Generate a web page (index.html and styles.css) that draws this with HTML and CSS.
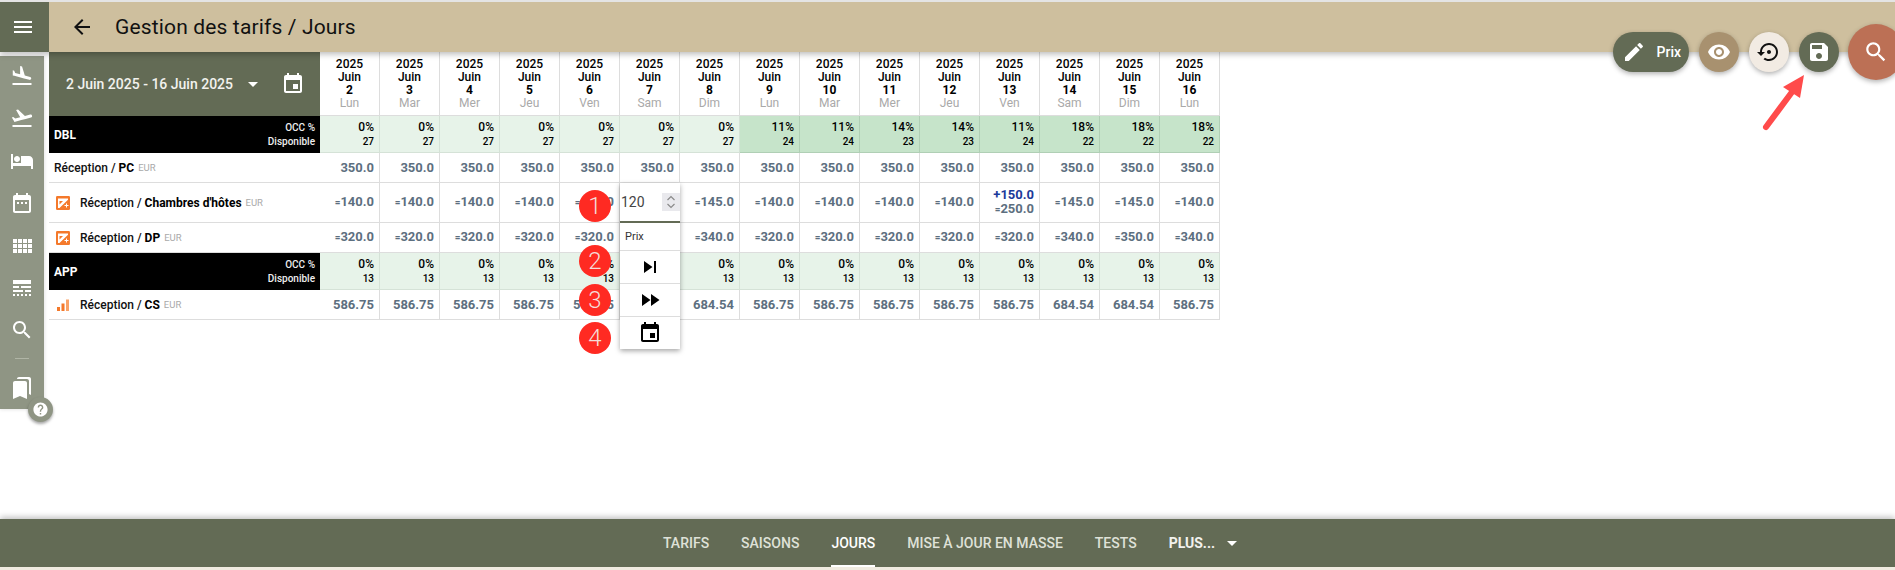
FILE: index.html
```html
<!DOCTYPE html>
<html lang="fr">
<head>
<meta charset="utf-8">
<title>Gestion des tarifs / Jours</title>
<link rel="stylesheet" href="styles.css">
</head>
<body>
<div class="app">
  <header class="topbar">
    <div class="burger"><svg class="i24" viewBox="0 0 24 24"><path d="M3 18h18v-2H3v2zm0-5h18v-2H3v2zm0-7v2h18V6H3z"/></svg></div>
    <svg class="back" viewBox="0 0 24 24"><path d="M20 11H7.83l5.59-5.59L12 4l-8 8 8 8 1.41-1.41L7.83 13H20v-2z"/></svg>
    <h1>Gestion des tarifs / Jours</h1>
  </header>
  <div class="middle">
    <nav class="sidebar">
      <svg class="i24" viewBox="0 0 24 24"><path d="M2.5 19h19v2h-19zm7.18-5.73l4.35 1.16 5.31 1.42c.8.21 1.62-.26 1.84-1.06.21-.8-.26-1.62-1.06-1.84l-5.31-1.42-2.76-9.02L10.12 2v8.28L5.15 8.95l-.93-2.32-1.45-.39v5.17l1.6.43 5.31 1.43z"/></svg>
      <svg class="i24" viewBox="0 0 24 24"><path d="M2.5 19h19v2h-19zm19.57-9.36c-.21-.8-1.04-1.28-1.84-1.06L14.92 10l-6.9-6.43-1.93.51 4.14 7.17-4.97 1.33-1.97-1.54-1.45.39 1.82 3.16.77 1.33 1.6-.43 5.31-1.42 4.35-1.16L21 11.49c.81-.23 1.28-1.05 1.07-1.85z"/></svg>
      <svg class="i24" viewBox="0 0 24 24"><path d="M7 13c1.66 0 3-1.34 3-3S8.66 7 7 7s-3 1.34-3 3 1.34 3 3 3zm12-6h-8v7H3V5H1v15h2v-3h18v3h2v-9c0-2.21-1.79-4-4-4z"/></svg>
      <svg class="i24" viewBox="0 0 24 24"><path d="M9 11H7v2h2v-2zm4 0h-2v2h2v-2zm4 0h-2v2h2v-2zm2-7h-1V2h-2v2H8V2H6v2H5c-1.11 0-1.99.9-1.99 2L3 20c0 1.1.89 2 2 2h14c1.1 0 2-.9 2-2V6c0-1.1-.9-2-2-2zm0 16H5V9h14v11z"/></svg>
      <svg class="i24" viewBox="0 0 24 24"><path d="M3 9h4V5H3v4zm0 5h4v-4H3v4zm5 0h4v-4H8v4zm5 0h4v-4h-4v4zM8 9h4V5H8v4zm5-4v4h4V5h-4zm5 9h4v-4h-4v4zM3 19h4v-4H3v4zm5 0h4v-4H8v4zm5 0h4v-4h-4v4zm5 0h4v-4h-4v4zm0-14v4h4V5h-4z"/></svg>
      <svg class="i24" viewBox="0 0 24 24"><path d="M3 4h18v4H3zM3 10h6v2H3zM11 10h10v2H11zM3 14h10v2H3zM15 14h6v2h-6zM3 18h2v2H3zM7 18h2v2H7zM11 18h2v2h-2zM15 18h2v2h-2zM19 18h2v2h-2z"/></svg>
      <svg class="i24" viewBox="0 0 24 24"><path d="M15.5 14h-.79l-.28-.27C15.41 12.59 16 11.11 16 9.5 16 5.91 13.09 3 9.5 3S3 5.91 3 9.5 5.91 16 9.5 16c1.61 0 3.09-.59 4.23-1.57l.27.28v.79l5 4.99L20.49 19l-4.99-5zm-6 0C7.01 14 5 11.99 5 9.5S7.01 5 9.5 5 14 7.01 14 9.5 11.99 14 9.5 14z"/></svg>
      <span class="rule"></span>
      <svg class="i24" viewBox="0 0 24 24"><path d="M19 18l2 1V3c0-1.1-.9-2-2-2H8.99C7.89 1 7 1.9 7 3h10c1.1 0 2 .9 2 2v13zM15 5H5c-1.1 0-2 .9-2 2v16l7-3 7 3V7c0-1.1-.9-2-2-2z"/></svg>
      <span class="help"><svg viewBox="0 0 24 24"><path d="M12 2C6.48 2 2 6.48 2 12s4.48 10 10 10 10-4.48 10-10S17.52 2 12 2zm1 17h-2v-2h2v2zm2.07-7.75l-.9.92C13.45 12.9 13 13.5 13 15h-2v-.5c0-1.1.45-2.1 1.17-2.83l1.24-1.26c.37-.36.59-.86.59-1.41 0-1.1-.9-2-2-2s-2 .9-2 2H8c0-2.21 1.79-4 4-4s4 1.79 4 4c0 .88-.36 1.68-.93 2.25z"/></svg></span>
    </nav>
    <table class="grid">
      <thead>
        <tr class="r-head">
          <th class="range">
            <div class="range-in">
              <span class="range-text">2 Juin 2025 - 16 Juin 2025</span>
              <span class="caret"></span>
              <svg class="i24 cal" viewBox="0 0 24 24"><path d="M17 12h-5v5h5v-5zM16 1v2H8V1H6v2H5c-1.11 0-1.99.9-1.99 2L3 19c0 1.1.89 2 2 2h14c1.1 0 2-.9 2-2V5c0-1.1-.9-2-2-2h-1V1h-2zm3 18H5V8h14v11z"/></svg>
            </div>
          </th>
          <th>2025<br>Juin<br><b>2</b><br><span class="dow">Lun</span></th>
          <th>2025<br>Juin<br><b>3</b><br><span class="dow">Mar</span></th>
          <th>2025<br>Juin<br><b>4</b><br><span class="dow">Mer</span></th>
          <th>2025<br>Juin<br><b>5</b><br><span class="dow">Jeu</span></th>
          <th>2025<br>Juin<br><b>6</b><br><span class="dow">Ven</span></th>
          <th>2025<br>Juin<br><b>7</b><br><span class="dow">Sam</span></th>
          <th>2025<br>Juin<br><b>8</b><br><span class="dow">Dim</span></th>
          <th>2025<br>Juin<br><b>9</b><br><span class="dow">Lun</span></th>
          <th>2025<br>Juin<br><b>10</b><br><span class="dow">Mar</span></th>
          <th>2025<br>Juin<br><b>11</b><br><span class="dow">Mer</span></th>
          <th>2025<br>Juin<br><b>12</b><br><span class="dow">Jeu</span></th>
          <th>2025<br>Juin<br><b>13</b><br><span class="dow">Ven</span></th>
          <th>2025<br>Juin<br><b>14</b><br><span class="dow">Sam</span></th>
          <th>2025<br>Juin<br><b>15</b><br><span class="dow">Dim</span></th>
          <th>2025<br>Juin<br><b>16</b><br><span class="dow">Lun</span></th>
        </tr>
      </thead>
      <tbody>
        <tr class="r-occ">
          <td class="room"><div class="room-in"><span class="room-name">DBL</span><span class="room-legend">OCC %<br>Disponible</span></div></td>
          <td class="o">0%<small>27</small></td><td class="o">0%<small>27</small></td><td class="o">0%<small>27</small></td><td class="o">0%<small>27</small></td><td class="o">0%<small>27</small></td><td class="o">0%<small>27</small></td><td class="o">0%<small>27</small></td>
          <td class="o hi">11%<small>24</small></td><td class="o hi">11%<small>24</small></td><td class="o hi">14%<small>23</small></td><td class="o hi">14%<small>23</small></td><td class="o hi">11%<small>24</small></td><td class="o hi">18%<small>22</small></td><td class="o hi">18%<small>22</small></td><td class="o hi">18%<small>22</small></td>
        </tr>
        <tr class="r-pc">
          <td class="label"><div class="label-in">Réception / <b>PC</b> <span class="cur">EUR</span></div></td>
          <td class="p">350.0</td><td class="p">350.0</td><td class="p">350.0</td><td class="p">350.0</td><td class="p">350.0</td><td class="p">350.0</td><td class="p">350.0</td><td class="p">350.0</td><td class="p">350.0</td><td class="p">350.0</td><td class="p">350.0</td><td class="p">350.0</td><td class="p">350.0</td><td class="p">350.0</td><td class="p">350.0</td>
        </tr>
        <tr class="r-ch">
          <td class="label"><div class="label-in"><svg class="ico" viewBox="0 0 14 14"><rect width="14" height="14" rx="1.2" fill="#f4792b"/><path d="M2 2.500h10v1.300L3.500 12H2zM3.500 5v3.500L7 5z" fill="#fff" fill-rule="evenodd"/><path d="M8.500 9h4v1h-4zM10 7.500h1v4h-1z" fill="#fff"/></svg>Réception / <b>Chambres d'hôtes</b> <span class="cur">EUR</span></div></td>
          <td class="p"><i>=</i>140.0</td><td class="p"><i>=</i>140.0</td><td class="p"><i>=</i>140.0</td><td class="p"><i>=</i>140.0</td><td class="p"><i>=</i>140.0</td><td class="p"></td><td class="p"><i>=</i>145.0</td><td class="p"><i>=</i>140.0</td><td class="p"><i>=</i>140.0</td><td class="p"><i>=</i>140.0</td><td class="p"><i>=</i>140.0</td><td class="p"><span class="plus">+150.0</span><span class="sub"><i>=</i>250.0</span></td><td class="p"><i>=</i>145.0</td><td class="p"><i>=</i>145.0</td><td class="p"><i>=</i>140.0</td>
        </tr>
        <tr class="r-pc">
          <td class="label"><div class="label-in"><svg class="ico" viewBox="0 0 14 14"><rect width="14" height="14" rx="1.2" fill="#f4792b"/><path d="M2 2.500h10v1.300L3.500 12H2zM3.500 5v3.500L7 5z" fill="#fff" fill-rule="evenodd"/><path d="M8.500 9h4v1h-4zM10 7.500h1v4h-1z" fill="#fff"/></svg>Réception / <b>DP</b> <span class="cur">EUR</span></div></td>
          <td class="p"><i>=</i>320.0</td><td class="p"><i>=</i>320.0</td><td class="p"><i>=</i>320.0</td><td class="p"><i>=</i>320.0</td><td class="p"><i>=</i>320.0</td><td class="p"></td><td class="p"><i>=</i>340.0</td><td class="p"><i>=</i>320.0</td><td class="p"><i>=</i>320.0</td><td class="p"><i>=</i>320.0</td><td class="p"><i>=</i>320.0</td><td class="p"><i>=</i>320.0</td><td class="p"><i>=</i>340.0</td><td class="p"><i>=</i>350.0</td><td class="p"><i>=</i>340.0</td>
        </tr>
        <tr class="r-occ">
          <td class="room"><div class="room-in"><span class="room-name">APP</span><span class="room-legend">OCC %<br>Disponible</span></div></td>
          <td class="o">0%<small>13</small></td><td class="o">0%<small>13</small></td><td class="o">0%<small>13</small></td><td class="o">0%<small>13</small></td><td class="o">0%<small>13</small></td><td class="o">0%<small>13</small></td><td class="o">0%<small>13</small></td><td class="o">0%<small>13</small></td><td class="o">0%<small>13</small></td><td class="o">0%<small>13</small></td><td class="o">0%<small>13</small></td><td class="o">0%<small>13</small></td><td class="o">0%<small>13</small></td><td class="o">0%<small>13</small></td><td class="o">0%<small>13</small></td>
        </tr>
        <tr class="r-pc">
          <td class="label"><div class="label-in"><svg class="ico" viewBox="0 0 14 14"><path d="M1 9h3v4H1zM5.500 5.500h3V13h-3z" fill="#f4792b"/><path d="M10 1.500h3V13h-3z" fill="#f9a267"/></svg>Réception / <b>CS</b> <span class="cur">EUR</span></div></td>
          <td class="p">586.75</td><td class="p">586.75</td><td class="p">586.75</td><td class="p">586.75</td><td class="p">586.75</td><td class="p">586.75</td><td class="p">684.54</td><td class="p">586.75</td><td class="p">586.75</td><td class="p">586.75</td><td class="p">586.75</td><td class="p">586.75</td><td class="p">684.54</td><td class="p">684.54</td><td class="p">586.75</td>
        </tr>
      </tbody>
    </table>
  </div>
  <footer class="tabs">
    <span class="tab">TARIFS</span>
    <span class="tab">SAISONS</span>
    <span class="tab on">JOURS</span>
    <span class="tab">MISE À JOUR EN MASSE</span>
    <span class="tab">TESTS</span>
    <span class="tab more">PLUS...<span class="caret small"></span></span>
  </footer>
  <div class="strip"></div>

  <div class="fabs">
    <span class="fab pill"><svg class="i24" viewBox="0 0 24 24"><path d="M3 17.250V21h3.750L17.810 9.940l-3.750-3.750L3 17.250zM20.710 7.040c.39-.39.39-1.020 0-1.410l-2.340-2.340c-.39-.39-1.020-.39-1.410 0l-1.830 1.830 3.750 3.750 1.830-1.830z"/></svg>Prix</span>
    <span class="fab eye"><svg class="i24" viewBox="0 0 24 24"><path d="M12 4.500C7 4.500 2.730 7.610 1 12c1.730 4.390 6 7.500 11 7.500s9.270-3.110 11-7.500c-1.730-4.390-6-7.500-11-7.500zM12 17c-2.760 0-5-2.240-5-5s2.240-5 5-5 5 2.240 5 5-2.240 5-5 5zm0-8c-1.660 0-3 1.340-3 3s1.340 3 3 3 3-1.340 3-3-1.340-3-3-3z"/></svg></span>
    <span class="fab restore"><svg class="i24" viewBox="0 0 24 24"><path d="M14 12c0-1.100-.9-2-2-2s-2 .9-2 2 .9 2 2 2 2-.9 2-2zm-2-9c-4.970 0-9 4.030-9 9H0l4 4 4-4H5c0-3.870 3.130-7 7-7s7 3.130 7 7-3.130 7-7 7c-1.510 0-2.910-.49-4.060-1.300l-1.420 1.440C8.040 20.300 9.940 21 12 21c4.970 0 9-4.030 9-9s-4.030-9-9-9z"/></svg></span>
    <span class="fab save"><svg class="i24" viewBox="0 0 24 24"><path d="M17 3H5c-1.110 0-2 .9-2 2v14c0 1.100.89 2 2 2h14c1.100 0 2-.9 2-2V7l-4-4zm-5 16c-1.660 0-3-1.340-3-3s1.340-3 3-3 3 1.340 3 3-1.340 3-3 3zm3-10H5V5h10v4z"/></svg></span>
    <span class="fab big"><svg class="i24" viewBox="0 0 24 24"><path d="M15.500 14h-.79l-.28-.27C15.410 12.590 16 11.110 16 9.500 16 5.910 13.090 3 9.500 3S3 5.910 3 9.500 5.910 16 9.500 16c1.610 0 3.090-.59 4.230-1.570l.27.280v.79l5 4.990L20.490 19l-4.990-5zm-6 0C7.010 14 5 11.990 5 9.500S7.010 5 9.500 5 14 7.010 14 9.500 11.990 14 9.500 14z"/></svg></span>
  </div>

  <svg class="arrow" viewBox="0 0 50 60"><path d="M6 55L32 20" stroke="#ff4b4b" stroke-width="6" stroke-linecap="round" fill="none"/><path d="M44 3L23 15 40 26z" fill="#ff4b4b"/></svg>

  <div class="pop">
    <div class="pop-input"><span class="pop-val">120</span><span class="spin"><svg viewBox="0 0 10 16"><path d="M1.500 6L5 2.500 8.500 6M1.500 10L5 13.500 8.500 10" fill="none" stroke="#8a8a8a" stroke-width="1.200"/></svg></span></div>
    <div class="pop-label">Prix</div>
    <div class="pop-btn"><svg class="i24" viewBox="0 0 24 24"><path d="M6 18l8.500-6L6 6v12zM16 6v12h2V6h-2z"/></svg></div>
    <div class="pop-btn"><svg class="i24" viewBox="0 0 24 24"><path d="M4 18l8.500-6L4 6v12zm9-12v12l8.500-6L13 6z"/></svg></div>
    <div class="pop-btn last"><svg class="i24" viewBox="0 0 24 24"><path d="M17 12h-5v5h5v-5zM16 1v2H8V1H6v2H5c-1.110 0-1.990.9-1.990 2L3 19c0 1.100.89 2 2 2h14c1.100 0 2-.9 2-2V5c0-1.100-.9-2-2-2h-1V1h-2zm3 18H5V8h14v11z"/></svg></div>
  </div>
  <span class="num n1">1</span>
  <span class="num n2">2</span>
  <span class="num n3">3</span>
  <span class="num n4">4</span>
</div>
</body>
</html>
```
FILE: styles.css
```css
* { box-sizing: border-box; }
html, body { margin: 0; padding: 0; height: 100%; overflow: hidden; background: #fff; }
body { font-family: Roboto, "Liberation Sans", sans-serif; color: #000; }
svg { display: block; fill: currentColor; }
.i24 { width: 24px; height: 24px; }

.app { position: relative; width: 1895px; height: 570px; display: flex; flex-direction: column; border-top: 2px solid #e4e4e4; overflow: hidden; background: #fff; }

.topbar { height: 50px; flex: none; background: #cebf9e; display: flex; align-items: center; box-shadow: 0 2px 6px rgba(0,0,0,.28); position: relative; z-index: 3; }
.burger { width: 49px; height: 50px; background: #636b55; color: #fff; display: flex; align-items: center; justify-content: center; padding-right: 4px; flex: none; }
.back { width: 24px; height: 24px; margin-left: 21px; color: #111; flex: none; }
h1 { margin: 0 0 0 21px; font-size: 21px; font-weight: 400; letter-spacing: .15px; color: #111; }

.middle { flex: 1; display: flex; align-items: flex-start; min-height: 0; }
.sidebar { position: relative; width: 44px; height: 353px; margin: 4px 5px 0 0; background: #8f9584; color: #fff; display: flex; flex-direction: column; align-items: center; padding-top: 8px; gap: 18.400px; flex: none; z-index: 1; box-shadow: 0 0 4px rgba(0,0,0,.15); }
.rule { width: 14px; height: 1px; background: #b0b5a6; margin: -3px 0 -1px; }
.help { position: absolute; left: 28px; bottom: -13px; width: 25px; height: 25px; border-radius: 50%; background: #8f9584; color: #fff; display: flex; align-items: center; justify-content: center; box-shadow: 0 2px 3px rgba(0,0,0,.35); }
.help svg { width: 17px; height: 17px; }

.grid { border-collapse: separate; border-spacing: 0; table-layout: fixed; width: 1171px; flex: none; }
.grid th, .grid td { padding: 0; width: 60px; border-right: 1px solid #ddd; border-bottom: 1px solid #ddd; }
.grid th { font-weight: 500; font-size: 12px; line-height: 13px; text-align: center; vertical-align: middle; }
.grid th.range, .grid td.room, .grid td.label { width: 271px; border-right: 0; }
.grid th b { font-weight: 700; }
.dow { color: #a9a9a9; font-weight: 400; }
.r-head { height: 64px; }
.r-occ { height: 37px; }
.r-pc { height: 30px; }
.r-ch { height: 40px; }

.grid th.range { background: #636b55; color: #fff; border: 0; text-align: left; }
.range-in { display: flex; align-items: center; padding-left: 17px; height: 100%; }
.range-text { font-size: 14px; font-weight: 500; color: #f2f2ee; width: 167px; }
.caret { width: 0; height: 0; border-left: 5px solid transparent; border-right: 5px solid transparent; border-top: 5px solid currentColor; margin-left: 15px; }
.cal { margin-left: 23px; color: #fff; }

.grid td.room { background: #000; color: #fff; border: 0; }
.room-in { display: flex; align-items: center; justify-content: space-between; padding: 0 5px; }
.room-name { font-size: 12px; font-weight: 700; }
.room-legend { font-size: 10px; line-height: 14px; font-weight: 500; text-align: right; color: #eee; }

.o { background: #e7f3e9; text-align: right; font-size: 12px; font-weight: 500; line-height: 15px; padding-right: 5px !important; border-color: #d5e2d7 !important; vertical-align: middle; }
.o small { display: block; font-size: 10px; line-height: 14px; font-weight: 500; }
.o.hi { background: #c6e4ca; border-color: #b0cfb5 !important; }

.label-in { display: flex; align-items: center; font-size: 12px; font-weight: 500; padding-left: 5px; white-space: pre; color: #111; }
.label-in b { font-weight: 700; color: #000; }
.cur { font-size: 9.500px; color: #a9a9a9; font-weight: 400; margin-left: 4px; }
.ico { width: 14px; height: 14px; margin: 0 10px 0 2px; flex: none; }

.p { text-align: right; padding-right: 5px !important; font-size: 13px; font-weight: 700; color: #5d6f7f; vertical-align: middle; line-height: 14px; }
.p i { font-style: normal; font-size: 10px; }
.plus { display: block; color: #1c3a9a; }
.sub { display: block; }

.tabs { position: absolute; left: 0; right: 0; top: 517px; height: 48px; background: #636b55; display: flex; justify-content: center; align-items: stretch; padding-left: 5px; box-shadow: 0 -2px 6px rgba(0,0,0,.25); }
.tab { display: flex; align-items: center; padding: 0 16px; font-size: 14px; font-weight: 500; color: #dfe1d8; position: relative; }
.tab.on { color: #fff; }
.tab.on::after { content: ""; position: absolute; left: 16px; right: 16px; bottom: 0; height: 2px; background: #fff; }
.tab.more { color: #f2f2ee; font-weight: 700; }
.caret.small { color: #fff; margin-left: 12px; }
.strip { position: absolute; left: 0; right: 0; top: 565px; height: 3px; background: #f0ebe0; }

.fabs { position: absolute; top: 22px; left: 1613px; display: flex; gap: 10px; align-items: flex-start; z-index: 5; }
.fab { display: flex; align-items: center; justify-content: center; width: 40px; height: 40px; border-radius: 20px; margin-top: 8px; box-shadow: 0 2px 5px rgba(0,0,0,.3); color: #fff; }
.fab.pill { width: 76px; background: #636b55; justify-content: space-between; padding: 0 8px 0 9px; font-size: 14px; font-weight: 500; }
.fab.eye { background: #a8916f; }
.fab.restore { background: #f2ebe3; color: #111; }
.fab.save { background: #636b55; }
.fab.big { width: 56px; height: 56px; border-radius: 28px; margin: 0 0 0 -1px; background: #bc7055; flex: none; }
.fab.big svg { width: 26px; height: 26px; }

.arrow { position: absolute; left: 1760px; top: 70px; width: 50px; height: 60px; z-index: 5; }

.pop { position: absolute; left: 620px; top: 181px; width: 60px; background: #fff; box-shadow: 0 2px 5px rgba(0,0,0,.35); z-index: 4; display: flex; flex-direction: column; }
.pop-input { height: 40px; border-bottom: 2px solid #636b55; display: flex; align-items: center; justify-content: space-between; padding-left: 1px; }
.pop-val { font-size: 14px; color: #444; }
.spin { width: 18px; height: 18px; background: #e9e9ed; display: flex; align-items: center; justify-content: center; }
.spin svg { width: 10px; height: 16px; }
.pop-label { height: 28px; font-size: 11px; color: #333; padding-left: 5px; display: flex; align-items: center; border-bottom: 1px solid #ddd; }
.pop-btn { height: 33px; display: flex; align-items: center; justify-content: center; border-bottom: 1px solid #ddd; color: #000; }
.pop-btn.last { border-bottom: 0; height: 32px; }

.num { position: absolute; left: 579px; width: 32px; height: 32px; border-radius: 50%; background: #ff2a22; color: #f5dcd8; font-size: 24px; font-weight: 300; display: flex; align-items: center; justify-content: center; z-index: 6; }
.n1 { top: 188px; }
.n2 { top: 243px; }
.n3 { top: 282px; }
.n4 { top: 320px; }
```
